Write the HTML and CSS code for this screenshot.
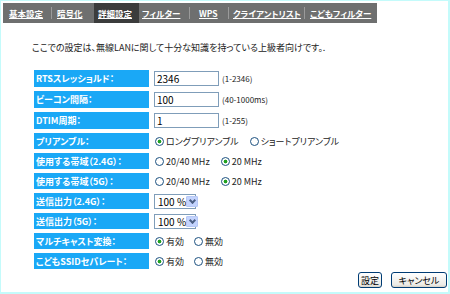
FILE: index.html
```html
<!DOCTYPE html>
<html lang="ja">
<head>
    <meta charset="UTF-8">
    <title>詳細設定</title>
    <link rel="stylesheet" href="styles.css">
</head>
<body>
<div class="frame">
    <div class="tabs">
        <a class="tab tab-1">基本設定</a>
        <a class="tab tab-2">暗号化</a>
        <a class="tab tab-3 tab-active">詳細設定</a>
        <a class="tab tab-4">フィルター</a>
        <a class="tab tab-5">WPS</a>
        <a class="tab tab-6">クライアントリスト</a>
        <a class="tab tab-7">こどもフィルター</a>
    </div>

    <p class="note">ここでの設定は、無線LANに関して十分な知識を持っている上級者向けです。.</p>

    <div class="rows">
        <div class="row row-tall">
            <div class="label">RTSスレッショルド：</div>
            <div class="value"><input class="text" type="text" value="2346"><span class="hint">(1-2346)</span></div>
        </div>
        <div class="row row-tall">
            <div class="label">ビーコン間隔：</div>
            <div class="value"><input class="text" type="text" value="100"><span class="hint">(40-1000ms)</span></div>
        </div>
        <div class="row row-tall">
            <div class="label">DTIM周期：</div>
            <div class="value"><input class="text" type="text" value="1"><span class="hint">(1-255)</span></div>
        </div>
        <div class="row">
            <div class="label">プリアンブル：</div>
            <div class="value radios">
                <label><input class="radio" type="radio" name="pre" checked>ロングプリアンブル</label>
                <label><input class="radio" type="radio" name="pre">ショートプリアンブル</label>
            </div>
        </div>
        <div class="row">
            <div class="label">使用する帯域（2.4G）：</div>
            <div class="value radios">
                <label><input class="radio" type="radio" name="bw24">20/40 MHz</label>
                <label><input class="radio" type="radio" name="bw24" checked>20 MHz</label>
            </div>
        </div>
        <div class="row">
            <div class="label">使用する帯域（5G）：</div>
            <div class="value radios">
                <label><input class="radio" type="radio" name="bw5">20/40 MHz</label>
                <label><input class="radio" type="radio" name="bw5" checked>20 MHz</label>
            </div>
        </div>
        <div class="row">
            <div class="label">送信出力（2.4G）：</div>
            <div class="value">
                <div class="select"><span class="select-text">100 %</span><span class="select-btn"></span></div>
            </div>
        </div>
        <div class="row">
            <div class="label">送信出力（5G）：</div>
            <div class="value">
                <div class="select"><span class="select-text">100 %</span><span class="select-btn"></span></div>
            </div>
        </div>
        <div class="row">
            <div class="label">マルチキャスト変換：</div>
            <div class="value radios radios-short">
                <label><input class="radio" type="radio" name="mc" checked>有効</label>
                <label><input class="radio" type="radio" name="mc">無効</label>
            </div>
        </div>
        <div class="row">
            <div class="label">こどもSSIDセパレート：</div>
            <div class="value radios radios-short">
                <label><input class="radio" type="radio" name="kid" checked>有効</label>
                <label><input class="radio" type="radio" name="kid">無効</label>
            </div>
        </div>
    </div>

    <div class="buttons">
        <button class="btn btn-set">設定</button>
        <button class="btn btn-cancel">キャンセル</button>
    </div>
</div>
</body>
</html>
```

FILE: styles.css
```css
html, body {
    margin: 0;
    padding: 0;
    background: #fff;
}

body {
    font-family: "Noto Sans CJK JP", "DejaVu Sans", sans-serif;
    font-size: 9px;
    font-feature-settings: "palt";
    color: #222;
}

.frame {
    width: 450px;
    height: 294px;
    box-sizing: border-box;
    border: 1px solid #c4fbfb;
    border-width: 1px 2px 2px 1px;
    padding: 2px 0 0 2px;
}

/* tab bar */
.tabs {
    display: flex;
    align-items: center;
    width: 374px;
    height: 20px;
    background: #6e6f6f;
}

.tab {
    display: flex;
    align-items: center;
    box-sizing: border-box;
    height: 100%;
    color: #fff;
    font-size: 8.5px;
    font-weight: bold;
    text-decoration: underline;
    white-space: nowrap;
    position: relative;
}

.tab + .tab::before {
    content: "";
    position: absolute;
    left: -1px;
    top: 4px;
    width: 1px;
    height: 12px;
    background: #9a9a9a;
}

.tab-1 { width: 49px; padding-left: 6px; }
.tab-2 { width: 42px; padding-left: 5px; }
.tab-3 { width: 45px; padding-left: 4px; }
.tab-4 { width: 51px; padding-left: 3px; }
.tab-5 { width: 39px; padding-left: 9px; }
.tab-6 { width: 76px; padding-left: 4px; }
.tab-7 { width: 72px; padding-left: 5px; }

.tab-active {
    background: #3b3c3c;
}
.tab-active::before, .tab-active + .tab::before { display: none; }

.note {
    margin: 19px 0 0 29px;
    line-height: 12px;
}

/* settings rows */
.rows {
    display: flex;
    flex-direction: column;
    gap: 4px;
    margin: 16px 0 0 31px;
}

.row {
    display: flex;
    align-items: center;
    height: 16px;
}

.row-tall {
    height: 17px;
}

.label {
    width: 115px;
    height: 100%;
    box-sizing: border-box;
    padding-left: 2px;
    display: flex;
    align-items: center;
    background: #1aa8f6;
    color: #fff;
    font-weight: bold;
    white-space: nowrap;
}

.value {
    display: flex;
    align-items: center;
    margin-left: 5px;
    white-space: nowrap;
}

.text {
    width: 65px;
    height: 15px;
    box-sizing: border-box;
    border: 1px solid #7f9db9;
    padding: 0 2px;
    font: inherit;
    font-size: 10px;
    color: #000;
    outline: 0;
}

.hint {
    margin-left: 3px;
    font-size: 8px;
}

.radios {
    margin-left: 6px;
    gap: 11px;
}

.radios label {
    display: flex;
    align-items: center;
}

.radios-short {
    gap: 10px;
}

.radio {
    appearance: none;
    margin: 0 2px 0 0;
    width: 9px;
    height: 9px;
    box-sizing: border-box;
    border: 1px solid #1c5180;
    border-radius: 50%;
    background: #fff;
}

.radio:checked {
    background: radial-gradient(circle, #21a121 0 1.6px, #fff 2.2px);
}

.select {
    display: flex;
    align-items: center;
    justify-content: space-between;
    width: 42px;
    height: 15px;
    box-sizing: border-box;
    border: 1px solid #7f9db9;
    padding: 0 1px 0 3px;
    font-size: 10px;
    color: #000;
}

.select-text {
    white-space: nowrap;
}

.select-btn {
    flex: none;
    width: 12px;
    height: 11px;
    box-sizing: border-box;
    background: #c3d3fd;
    border: 1px solid #b6c8f5;
    border-radius: 1px;
    position: relative;
}

.select-btn::after {
    content: "";
    position: absolute;
    left: 2.5px;
    top: 1px;
    width: 3px;
    height: 3px;
    border: solid #4d6185;
    border-width: 0 2px 2px 0;
    transform: rotate(45deg);
}

/* buttons */
.buttons {
    display: flex;
    justify-content: flex-end;
    gap: 9px;
    margin-top: 3px;
    padding-right: 1px;
}

.btn {
    height: 16px;
    box-sizing: border-box;
    border: 1px solid #003c74;
    border-radius: 3px;
    background: linear-gradient(#fff, #ecebe6 85%, #d6d0c5);
    font: inherit;
    font-size: 9px;
    color: #000;
    padding: 0;
}

.btn-set { width: 24px; }
.btn-cancel { width: 56px; }
```
